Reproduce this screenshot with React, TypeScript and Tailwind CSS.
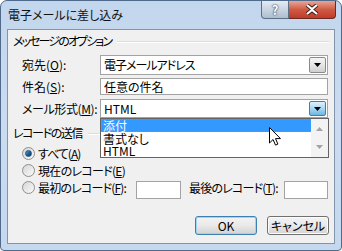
import React from 'react';

const Tri = () => (
  <svg width="7" height="4" viewBox="0 0 7 4">
    <path d="M0 0h7L3.5 4z" fill="#000" />
  </svg>
);

const Combo = ({ children, active = false }: { children: React.ReactNode; active?: boolean }) => (
  <div className="flex w-[228px] h-full border border-[#a3a3a3] bg-white">
    <div className="flex-1 flex items-center pl-[3px]">{children}</div>
    <div
      className={`w-[17px] my-[1px] mr-[1px] flex items-center justify-center border rounded-[2px] ${
        active
          ? 'border-[#3c7fb1] bg-gradient-to-b from-[#e0f1fb] via-[#a9d8f3] to-[#6cb6e0]'
          : 'border-[#8a8a8a] bg-gradient-to-b from-[#f4f4f4] via-[#e6e6e6] to-[#cfcfcf]'
      }`}
    >
      <Tri />
    </div>
  </div>
);

const Radio = ({ checked = false }: { checked?: boolean }) => (
  <div className="shrink-0 w-[13px] h-[13px] rounded-full border border-[#8e8f8f] bg-gradient-to-br from-[#d6d6d6] to-[#fafafa] flex items-center justify-center">
    {checked && (
      <div className="w-[7px] h-[7px] rounded-full bg-gradient-to-br from-[#5ba2d9] via-[#1f5f96] to-[#0c3a63] border border-[#1d4f7c]" />
    )}
  </div>
);

const Btn = ({ children, def = false }: { children: React.ReactNode; def?: boolean }) => (
  <div
    className={`h-full w-[62px] rounded-[3px] border flex items-center justify-center bg-gradient-to-b from-[#f3f3f3] via-[#e9e9e9] to-[#d2d2d2] ${
      def ? 'border-[#3c7fb1] shadow-[inset_0_0_0_1px_#9fd5f2]' : 'border-[#707070] shadow-[inset_0_0_0_1px_#fcfcfc]'
    }`}
  >
    {children}
  </div>
);

const U = ({ c }: { c: string }) => <span className="underline underline-offset-1">{c}</span>;

export default function App() {
  return (
    <div className="relative w-[342px] h-[251px] overflow-hidden whitespace-nowrap bg-white font-['Noto_Sans_CJK_JP','Noto_Sans',sans-serif] text-[12px] leading-none text-black [font-feature-settings:'palt']">
      <div className="w-full h-full flex flex-col rounded-t-[7px] rounded-b-[4px] border border-[#4f6a8a] bg-gradient-to-b from-[#c2d6ed] via-[#cbdcf0] to-[#c5d8ee]">
        {/* title bar */}
        <div className="h-[28px] flex items-start justify-between pl-[7px] pr-[5px]">
          <div className="pt-[8px] text-[12px] text-[#111]">電子メールに差し込み</div>
          <div className="flex">
            <div className="w-[28px] h-[18px] rounded-bl-[4px] border border-t-0 border-[#5b6f86] bg-gradient-to-b from-[#e4ebf3] via-[#c9d5e2] to-[#aebdcd] flex items-center justify-center text-white font-bold text-[13px] [text-shadow:0_0_2px_#2a3a4f,0_0_1px_#2a3a4f]">
              ?
            </div>
            <div className="w-[47px] h-[18px] rounded-br-[4px] border border-t-0 border-l-0 border-[#6b2a22] bg-gradient-to-b from-[#e8a597] via-[#cf5a45] to-[#c03a26] flex items-center justify-center">
              <svg width="14" height="11" viewBox="0 0 14 11">
                <path d="M2 1l5 4 5-4M2 10l5-4 5 4" stroke="#3b1a14" strokeWidth="4" fill="none" />
                <path d="M2 1l5 4 5-4M2 10l5-4 5 4" stroke="#fff" strokeWidth="2.2" fill="none" />
              </svg>
            </div>
          </div>
        </div>

        {/* client */}
        <div className="mx-[6px] mb-[6px] flex-1 border border-[#8195ad] bg-[#f0f0f0] pt-[5px] pl-[5px] pr-[5px] flex flex-col">
          <div className="h-[12px] flex items-center gap-[6px]">
            <span className="tracking-[-1.9px]">メッセージのオプション</span>
            <div className="flex-1 mt-[2px] h-[2px] border-t border-[#d5dfe5] border-b border-b-white" />
          </div>

          <div className="mt-[8px] h-[20px] flex items-center pl-[9px]">
            <div className="w-[78px] shrink-0">
              宛先(<U c="O" />):
            </div>
            <Combo>
              <span className="tracking-[-1px]">電子メールアドレス</span>
            </Combo>
          </div>

          <div className="mt-[3px] h-[17px] flex items-center pl-[9px]">
            <div className="w-[78px] shrink-0">
              件名(<U c="S" />):
            </div>
            <div className="w-[228px] h-full border border-[#a3a3a3] bg-white flex items-center pl-[3px]">任意の件名</div>
          </div>

          <div className="relative mt-[4px] h-[19px] flex items-center pl-[9px]">
            <div className="w-[78px] shrink-0 tracking-[-0.4px]">
              メール形式(<U c="M" />):
            </div>
            <Combo active>HTML</Combo>

            {/* open list */}
            <div className="absolute left-[87px] top-[19px] w-[229px] h-[40px] border border-[#646464] bg-white flex z-10">
              <div className="flex-1 flex flex-col">
                <div className="h-[13px] bg-[#3399ff] border border-dotted border-[#d08030] text-white flex items-center pl-[1px]">添付</div>
                <div className="h-[13px] flex items-center pl-[2px]">書式なし</div>
                <div className="h-[12px] flex items-center pl-[2px]">HTML</div>
              </div>
              <div className="w-[17px] bg-[#f3f3f3] flex flex-col items-center justify-between py-[8px]">
                <svg width="7" height="4" viewBox="0 0 7 4">
                  <path d="M0 4h7L3.5 0z" fill="#a3a3a3" />
                </svg>
                <svg width="7" height="4" viewBox="0 0 7 4">
                  <path d="M0 0h7L3.5 4z" fill="#a3a3a3" />
                </svg>
              </div>
            </div>
          </div>

          <div className="mt-[9px] h-[12px] flex items-center gap-[6px]">
            <span className="tracking-[-1.4px]">レコードの送信</span>
            <div className="flex-1 mt-[2px] h-[2px] border-t border-[#d5dfe5] border-b border-b-white" />
          </div>

          <div className="mt-[6px] h-[17px] flex items-center pl-[9px] gap-[3px]">
            <Radio checked />
            <span className="tracking-[-1px]">
              すべて(<U c="A" />)
            </span>
          </div>
          <div className="h-[17px] flex items-center pl-[9px] gap-[3px]">
            <Radio />
            <span className="tracking-[-0.7px]">
              現在のレコード(<U c="E" />)
            </span>
          </div>
          <div className="h-[20px] flex items-start pl-[9px]">
            <div className="h-[17px] w-[114px] shrink-0 flex items-center gap-[3px]">
              <Radio />
              <span className="tracking-[-0.8px]">
                最初のレコード(<U c="F" />):
              </span>
            </div>
            <div className="mt-[2px] w-[45px] h-[18px] shrink-0 border border-[#a3a3a3] bg-white" />
            <div className="h-[17px] w-[103px] shrink-0 pl-[8px] flex items-center tracking-[-0.8px]">
              最後のレコード(<U c="T" />):
            </div>
            <div className="mt-[2px] w-[44px] h-[18px] shrink-0 border border-[#a3a3a3] bg-white" />
          </div>

          <div className="mt-[17px] h-[19px] flex justify-end gap-[10px]">
            <Btn def>OK</Btn>
            <Btn>キャンセル</Btn>
          </div>
        </div>
      </div>

      {/* mouse cursor */}
      <svg className="absolute left-[269px] top-[127px] z-20" width="13" height="20" viewBox="0 0 13 20">
        <path d="M0.5 0.5v15.5l3.6-3.5 2.4 5.6 2.4-1-2.4-5.5h5z" fill="#fff" stroke="#000" strokeWidth="1" strokeLinejoin="round" />
      </svg>
    </div>
  );
}
